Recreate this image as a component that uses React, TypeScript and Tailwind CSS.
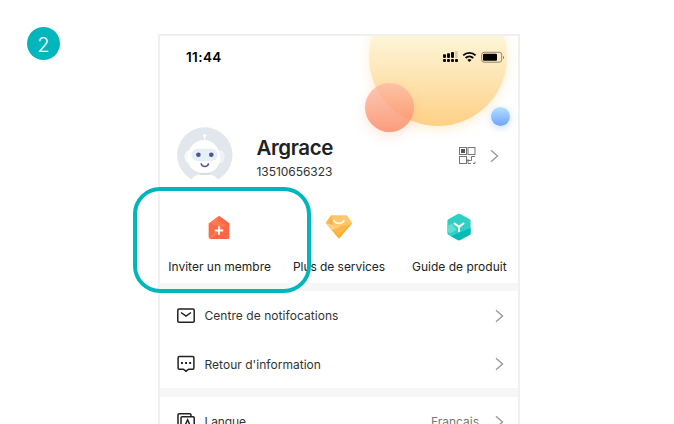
import React from "react";

const Chevron = () => (
  <svg width="9" height="14" viewBox="0 0 9 14" fill="none" stroke="#999" strokeWidth="1.4">
    <path d="M1 1.3 7.5 7 1 12.7" />
  </svg>
);

const StatusIcons = () => (
  <svg className="mt-[15px] h-3 w-[62px] shrink-0" viewBox="443 51 62 12">
    <g fill="#0a0905">
      <rect x="443" y="54.3" width="3" height="3.6" rx=".8" />
      <rect x="447" y="53.3" width="3" height="4.6" rx=".8" />
      <rect x="451" y="52" width="3" height="5.9" rx=".8" />
      <rect x="455" y="51" width="2.6" height="6.9" rx=".8" fill="#d8ccaa" />
      <rect x="443" y="59" width="3" height="3" rx=".9" />
      <rect x="447" y="59" width="3" height="3" rx=".9" />
      <rect x="451" y="59" width="3" height="3" rx=".9" />
      <rect x="455" y="59" width="3" height="3" rx=".9" />
      <path d="m469.4 62-2.1-2.1a3.1 3.1 0 0 1 4.2 0Z" />
    </g>
    <g fill="none" stroke="#0a0905" strokeWidth="1.9">
      <path d="M463.2 55.4a8.8 8.8 0 0 1 12.4 0M465.6 58a5.5 5.5 0 0 1 7.6 0" />
    </g>
    <rect x="481.7" y="52.3" width="20" height="9.9" rx="2.4" fill="none" stroke="#857b60" strokeWidth=".9" />
    <rect x="483" y="53.8" width="14" height="7" rx="1.1" fill="#050505" />
    <path d="M503 55.9a1.6 1.6 0 0 1 0 3Z" fill="#857b60" />
  </svg>
);

const Avatar = () => (
  <svg className="h-[54px] w-14 shrink-0" viewBox="176.7 127 56 54">
    <clipPath id="bust"><rect x="176" y="127" width="57" height="53" /></clipPath>
    <g clipPath="url(#bust)">
      <circle cx="204.5" cy="155" r="27.7" fill="#e2e7ee" />
      <path d="M204.4 136v6" stroke="#fff" strokeWidth=".9" />
      <circle cx="204.4" cy="135.8" r="1.7" fill="#fff" />
      <ellipse cx="188" cy="156.8" rx="3.7" ry="6.2" fill="#f9fafc" />
      <ellipse cx="220" cy="156.8" rx="4.3" ry="6.7" fill="#eff3f7" />
      <path d="M203.5 140c9.5 0 16.2 8 16.2 18.3 0 9.2-6.4 14.8-15.7 14.8s-16.8-5.6-16.8-14.8c0-10.3 7.3-18.3 16.3-18.3Z" fill="#fff" />
      <rect x="191.2" y="148.8" width="26.2" height="12.1" rx="6" fill="#e5eff6" />
      <circle cx="198.1" cy="154.7" r="2.3" fill="#5b5091" />
      <circle cx="211" cy="154.7" r="2.3" fill="#5b5091" />
      <path d="M200.8 163.3c.8 4.2 6.7 4.2 7.5 0" fill="none" stroke="#5b5091" strokeWidth="1.5" />
      <path d="M200 173h9v2h-9Z" fill="#d5dce3" />
      <path d="M190 181c2-3.8 5-6 9.2-6h10.7c4 0 6.5 2.4 8.4 6Z" fill="#fff" />
    </g>
  </svg>
);

const QrIcon = () => (
  <svg className="h-[18px] w-[17px]" viewBox="0 0 17 18" fill="none" stroke="#777" strokeWidth="1">
    <rect x=".5" y=".5" width="7" height="7" />
    <rect x="2" y="2" width="4" height="4" fill="#555" stroke="none" />
    <rect x="9" y=".5" width="7" height="7" />
    <rect x=".5" y="9.5" width="7" height="7" />
    <path d="M8 13.5h4.5V9.5h3.5M9 12V16.5h3M16 14.7v1.8h-2" />
  </svg>
);

const HouseIcon = () => (
  <svg className="size-7 -translate-x-px" viewBox="0 0 28 28">
    <path d="M3.8 10.3 13 3.4q1-.7 2 0l9.2 6.9v14a1.6 1.6 0 0 1-1.6 1.6H5.4a1.6 1.6 0 0 1-1.6-1.6Z" fill="#ff7950" />
    <path d="m3.8 10.2 12.4 3.6-12.4 11ZM14 3l10.2 7.3v3L12.7 8Z" fill="#ff6947" />
    <path d="m17 14 7.2-3.4v13.7q0 1.6-1.6 1.6H5.4L17 17Z" fill="#ff6648" />
    <path d="M14 13.3v8.4M9.8 17.5h8.4" stroke="#fff" strokeWidth="1.8" />
  </svg>
);

const DiamondIcon = () => (
  <svg className="size-7" viewBox="0 0 28 28">
    <path d="M6.2 2.2h15.6L27.2 10 14 25.4.8 10Z" fill="#ffc66c" />
    <path d="M.8 10 14 14l13.2-4L14 25.4Z" fill="#ffb849" />
    <path d="M6.2 2.2 8.2 12 .8 10Z" fill="#ffb34d" />
    <path d="m8.2 12 7 1.6L6.9 17.2.8 10Z" fill="#ffcf83" />
    <path d="M14 25.4 27.2 10l-5.5 4.2-7.8 8.4-8-6.9Z" fill="#ffac2d" />
    <path d="M8.7 6.8c2 4.7 8.6 4.7 10.6 0" fill="none" stroke="#fff7e8" strokeWidth="1.8" />
  </svg>
);

const CubeIcon = () => (
  <svg className="size-7 translate-x-px" viewBox="0 0 28 28">
    <path d="M14 .8q.7 0 1.2.3l9.5 5.2q.9.5.9 1.5v12.4q0 1-.9 1.5l-9.5 5.2q-1.2.7-2.4 0l-9.5-5.2q-.9-.5-.9-1.5V7.8q0-1 .9-1.5l9.5-5.2Q13.3.8 14 .8Z" fill="#2ed0c4" />
    <path d="m2.4 13 4.6-2.2 4.6 6-6.6 3.6-2.6-1.8Z" fill="#61ddd4" />
    <path d="m6 23.2 19.6-8.2v5.2q0 1-.9 1.5l-9.5 5.2q-1.2.7-2.4 0Z" fill="#05b9b5" />
    <path d="m8.9 10 5.1 3.9 5.1-3.9M14 13.5v5.4" fill="none" stroke="#fff" strokeWidth="2" />
  </svg>
);

const MailIcon = () => (
  <svg className="size-[18px]" viewBox="0 0 18 18" fill="none" stroke="#222" strokeWidth="1.5">
    <rect x=".8" y="2" width="16.4" height="13.2" rx="1.2" />
    <path d="M4 5.5 9 9.1l5-3.6" />
  </svg>
);

const FeedbackIcon = () => (
  <svg className="size-[18px]" viewBox="0 0 18 18" fill="none" stroke="#222" strokeWidth="1.5">
    <path d="M2.3 1.5h13.4q1.2 0 1.2 1.2v10.3q0 1.2-1.2 1.2h-4L9 16.2l-2.7-2h-4q-1.2 0-1.2-1.2V2.7q0-1.2 1.2-1.2Z" />
    <path d="M4 8h1.9M8.1 8h1.9M12.2 8h1.9" strokeWidth="1.9" />
  </svg>
);

const LanguageIcon = () => (
  <svg className="size-[18px]" viewBox="0 0 18 18" fill="none" stroke="#222" strokeWidth="1.5">
    <path d="M4 13.7H2.2Q1 13.7 1 12.5V2Q1 .8 2.2.8h10.6q1.2 0 1.2 1.2v1.7" />
    <rect x="4" y="3.8" width="13.2" height="13.3" rx="1.1" />
    <path d="m7.4 14 3.2-7.2 3.2 7.2M8.6 11.7h4" />
  </svg>
);

type ShortcutProps = { icon: React.ReactNode; label: string; tracking: string };
const Shortcut = ({ icon, label, tracking }: ShortcutProps) => (
  <div className="flex w-[120px] flex-col items-center">
    {icon}
    <span className={`mt-[18px] text-[12px] leading-4 whitespace-nowrap ${tracking}`}>{label}</span>
  </div>
);

type RowProps = { icon: React.ReactNode; label: string; tracking: string; value?: string };
const Row = ({ icon, label, tracking, value }: RowProps) => (
  <div className="flex h-[48.5px] items-center pt-px pr-[14px] pl-[17px] text-[12px] text-[#333]">
    {icon}
    <span className={`ml-[9.5px] whitespace-nowrap ${tracking}`}>{label}</span>
    <span className="mr-[16px] ml-auto text-[#777]">{value}</span>
    <Chevron />
  </div>
);

export default function App() {
  return (
    <main className="relative flex h-[424px] w-[674px] overflow-hidden bg-white pt-[34px] pl-[158px] font-[Inter,sans-serif] text-[#222]">
      <section className="relative h-[440px] w-[362px] shrink-0 overflow-hidden border-2 border-[#f0f0f0] bg-white">
        <div className="absolute top-[-48px] left-[209px] size-[138px] rounded-full bg-linear-to-b from-[#fcf8dd] from-30% to-[#fed085] shadow-[0_3px_12px_#ffd99770]" />
        <div className="absolute top-[47px] left-[205px] size-[49px] rounded-full bg-linear-to-b from-[#fbb9a2c4] to-[#f9865fd0] shadow-[0_4px_12px_#ff9a7940]" />
        <div className="absolute top-[71px] left-[331px] size-[19px] rounded-full bg-linear-to-b from-[#b3e1ff] to-[#72a2ff] shadow-[0_2px_7px_#7db5ff70]" />

        <div className="relative flex h-[91px] justify-between pr-[13px] pl-[26px]">
          <time className="mt-[13px] text-[13.5px] leading-[17px] font-semibold tracking-[0.4px] text-black">11:44</time>
          <StatusIcons />
        </div>

        <div className="relative flex h-[84px] items-start pr-[19px] pl-[17px]">
          <Avatar />
          <div className="ml-[23.5px] pt-[7px]">
            <h1 className="text-[20.5px] leading-[27px] font-semibold tracking-[-0.4px]">Argrace</h1>
            <p className="mt-[3px] text-[12px] leading-4 tracking-[-0.05px] text-[#333]">13510656323</p>
          </div>
          <div className="mt-[19.5px] ml-auto flex items-center gap-[14px]">
            <QrIcon />
            <Chevron />
          </div>
        </div>

        <div className="flex h-[72px] pt-[2px]">
          <Shortcut icon={<HouseIcon />} label="Inviter un membre" tracking="tracking-normal" />
          <Shortcut icon={<DiamondIcon />} label="Plus de services" tracking="tracking-[-0.05px]" />
          <Shortcut icon={<CubeIcon />} label="Guide de produit" tracking="translate-x-px tracking-normal" />
        </div>
        <div className="h-2 bg-[#f6f6f6]" />
        <Row icon={<MailIcon />} label="Centre de notifocations" tracking="tracking-[0.05px]" />
        <Row icon={<FeedbackIcon />} label="Retour d'information" tracking="translate-y-[0.5px] tracking-[0.03px]" />
        <div className="h-[9px] bg-[#f6f6f6]" />
        <Row icon={<LanguageIcon />} label="Langue" tracking="tracking-[-0.1px]" value="Français" />
      </section>

      <div className="absolute top-[27px] left-[27px] flex size-[33px] items-center justify-center rounded-full bg-[#00b6bd] pt-[3px] text-[20px] leading-none font-light text-white">2</div>
      <div className="absolute top-[187px] left-[133px] h-[106px] w-[178px] rounded-[27px] border-4 border-[#00b6bd]" />
    </main>
  );
}
